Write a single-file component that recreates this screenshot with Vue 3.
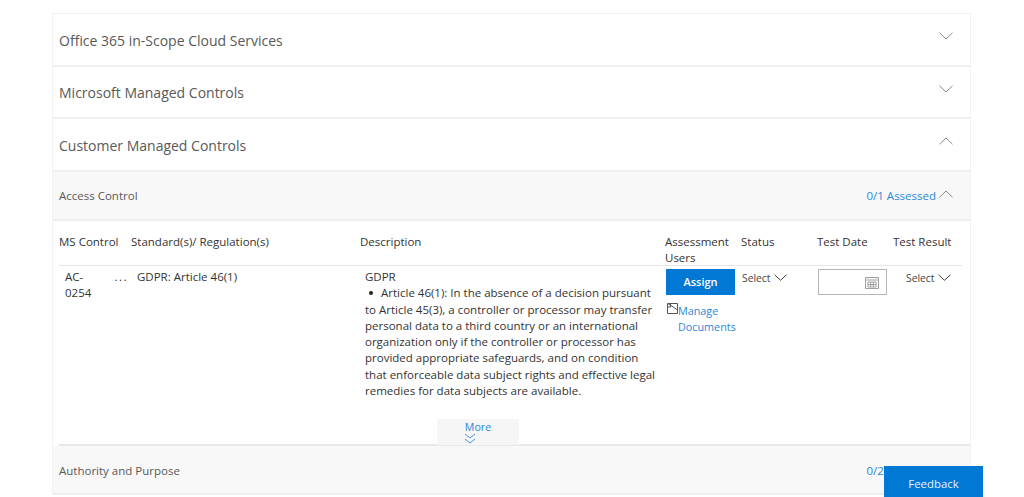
<script setup>
const sections = ['Office 365 in-Scope Cloud Services', 'Microsoft Managed Controls']

const columns = ['MS Control', 'Standard(s)/ Regulation(s)', 'Description', 'Assessment Users', 'Status', 'Test Date', 'Test Result']
</script>

<template>
  <div class="page">
    <div class="panel">
      <div v-for="section in sections" :key="section" class="section-head">
        <span>{{ section }}</span>
        <svg class="chevron" width="14" height="8" viewBox="0 0 14 8"><path d="M.5.8 7 7 13.5.8" /></svg>
      </div>
      <div class="section-head">
        <span>Customer Managed Controls</span>
        <svg class="chevron" width="14" height="8" viewBox="0 0 14 8"><path d="M.5 7.2 7 1l6.5 6.2" /></svg>
      </div>

      <div class="group-bar">
        <span>Access Control</span>
        <div class="assessed">
          <span>0/1 Assessed</span>
          <svg class="chevron up" width="14" height="8" viewBox="0 0 14 8"><path d="M.5 7.2 7 1l6.5 6.2" /></svg>
        </div>
      </div>

      <div class="table-wrap">
        <div class="table-row table-head">
          <div v-for="col in columns" :key="col">{{ col }}</div>
        </div>
        <div class="table-row table-body">
          <div class="control-id">
            <span>AC-<br />0254</span>
            <span class="dots">...</span>
          </div>
          <div class="standard">GDPR: Article 46(1)</div>
          <div class="description">
            <div>GDPR</div>
            <p><span class="bullet"></span>Article 46(1): In the absence of a decision pursuant to Article 45(3), a controller or processor may transfer personal data to a third country or an international organization only if the controller or processor has provided appropriate safeguards, and on condition that enforceable data subject rights and effective legal remedies for data subjects are available.</p>
            <button type="button" class="more">
              <span>More</span>
              <svg width="12" height="11" viewBox="0 0 12 11"><path d="M1 1l5 4 5-4M1 6l5 4 5-4" /></svg>
            </button>
          </div>
          <div class="users">
            <button type="button" class="assign">Assign</button>
            <div class="manage">
              <svg width="13" height="13" viewBox="0 0 13 13"><path d="M1.5 1.5h10v10h-10zM1.5 5h3M2 1.5l9.500 6.500M4.500 1.500v3.500" /></svg>
              <a href="#">Manage Documents</a>
            </div>
          </div>
          <div class="select-cell">
            <span>Select</span>
            <svg class="chevron dark" width="13" height="7" viewBox="0 0 13 7"><path d="M.5.7 6.500 6.300 12.500.7" /></svg>
          </div>
          <div class="date-cell">
            <div class="date-input">
              <svg width="14" height="13" viewBox="0 0 14 13"><path d="M.5 1.500h13v11H.5zM.5 4h13M3 1v1.500M11 1v1.500M3 6h8v5H3zM5.700 6v5M8.300 6v5M3 8.500h8" /></svg>
            </div>
          </div>
          <div class="select-cell result">
            <span>Select</span>
            <svg class="chevron dark" width="13" height="7" viewBox="0 0 13 7"><path d="M.5.7 6.500 6.300 12.500.7" /></svg>
          </div>
        </div>
      </div>

      <div class="group-bar">
        <span>Authority and Purpose</span>
        <div class="assessed">
          <span>0/2 Assessed</span>
          <svg class="chevron" width="14" height="8" viewBox="0 0 14 8"><path d="M.5.8 7 7 13.500.8" /></svg>
        </div>
      </div>
    </div>
    <button type="button" class="feedback">Feedback</button>
  </div>
</template>

<style>
html, body {
  overflow: hidden;
}
</style>

<style scoped>
.page {
  height: 497px;
  overflow: hidden;
  background: #fff;
  padding: 13px 53px 0 52px;
  box-sizing: border-box;
  font-family: "Open Sans", "Noto Sans", sans-serif;
  color: #333;
}

.panel {
  border: 1px solid #efefef;
  border-bottom: none;
  border-left: 1px solid #f2f2f2;
  border-right: 1px solid #f2f2f2;
}

.section-head {
  height: 48.600px;
  padding: 2px 17px 0 6px;
  border-bottom: 2px solid #f0f0f0;
  display: flex;
  align-items: center;
  justify-content: space-between;
  font-size: 14px;
  color: #595959;
}

.section-head .chevron {
  margin-top: -8px;
}

.chevron path {
  fill: none;
  stroke: #8a8a8a;
  stroke-width: 1;
}

.chevron.dark path {
  stroke: #444;
}

.group-bar {
  height: 46px;
  padding: 1px 17px 0 6px;
  background: #f8f8f8;
  border-bottom: 2px solid #eeeeee;
  display: flex;
  align-items: center;
  justify-content: space-between;
  font-size: 11.500px;
  color: #595959;
}

.assessed {
  display: flex;
  align-items: center;
  gap: 3px;
  color: #2b88d8;
}

.assessed .chevron.up {
  margin-top: -3px;
}

.table-wrap {
  padding-left: 6px;
}

.table-row {
  display: grid;
  grid-template-columns: 72px 229px 305px 76px 76px 76px 1fr;
}

.table-head {
  height: 45.500px;
  padding-top: 13px;
  box-sizing: border-box;
  border-bottom: 1px solid #e6e6e6;
  font-size: 11.500px;
  line-height: 16px;
  margin-right: 8px;
}

.table-body {
  height: 180px;
  box-sizing: border-box;
  border-bottom: 2px solid #e8e8e8;
  font-size: 11.500px;
  line-height: 16.200px;
  padding-top: 3px;
}

.control-id {
  display: flex;
  justify-content: space-between;
  padding: 0 3px 0 6px;
}

.dots {
  letter-spacing: 1.500px;
}

.standard {
  margin-left: 6px;
}

.description {
  position: relative;
  padding-left: 5px;
  padding-right: 8px;
}

.description p {
  margin: 0;
  width: 291px;
}

.bullet {
  display: inline-block;
  width: 4px;
  height: 4px;
  border-radius: 50%;
  background: #222;
  margin: 0 8px 2px 4px;
}

.more {
  position: absolute;
  left: 77px;
  top: 150px;
  width: 82px;
  height: 26px;
  padding: 2px 0 0;
  border: none;
  background: #f6f6f6;
  color: #2b88d8;
  font: inherit;
  font-size: 10.700px;
  line-height: 12px;
  display: flex;
  flex-direction: column;
  align-items: center;
}

.more svg {
  margin-right: 16px;
}

.more svg path,
.manage svg path,
.date-input svg path {
  fill: none;
  stroke-width: 1;
}

.more svg path {
  stroke: #4a94dc;
}

.manage svg path {
  stroke: #555;
}

.date-input svg path {
  stroke: #a0a0a0;
}

.users {
  padding-left: 1px;
  margin-right: -1px;
}

.assign {
  width: 69px;
  height: 26px;
  border: none;
  background: #0078d4;
  color: #fff;
  font: inherit;
  font-size: 11px;
  font-weight: 600;
  padding: 0;
  display: block;
}

.manage {
  display: flex;
  margin-top: 7px;
  color: #2b88d8;
  line-height: 16px;
  font-size: 10.800px;
}

.manage svg {
  flex: none;
}

.manage a {
  color: inherit;
  text-decoration: none;
  margin-top: 1px;
  margin-left: -1px;
}

.select-cell {
  display: flex;
  align-items: flex-start;
  gap: 4px;
  font-size: 10.300px;
  line-height: 16px;
  padding-left: 1px;
  padding-top: 1px;
  color: #444;
}

.select-cell svg {
  margin-top: 4px;
}

.result {
  padding-left: 13px;
}

.date-input {
  width: 69px;
  height: 26px;
  margin-left: 1px;
  box-sizing: border-box;
  border: 1px solid #b5b5b5;
  display: flex;
  align-items: center;
  justify-content: flex-end;
  padding-right: 7px;
}

.feedback {
  position: absolute;
  left: 884px;
  top: 466px;
  width: 99px;
  height: 31px;
  border: none;
  background: #0078d4;
  color: #e8f2fb;
  font-family: inherit;
  font-size: 11.400px;
  padding: 4px 0 0 0;
}
</style>
